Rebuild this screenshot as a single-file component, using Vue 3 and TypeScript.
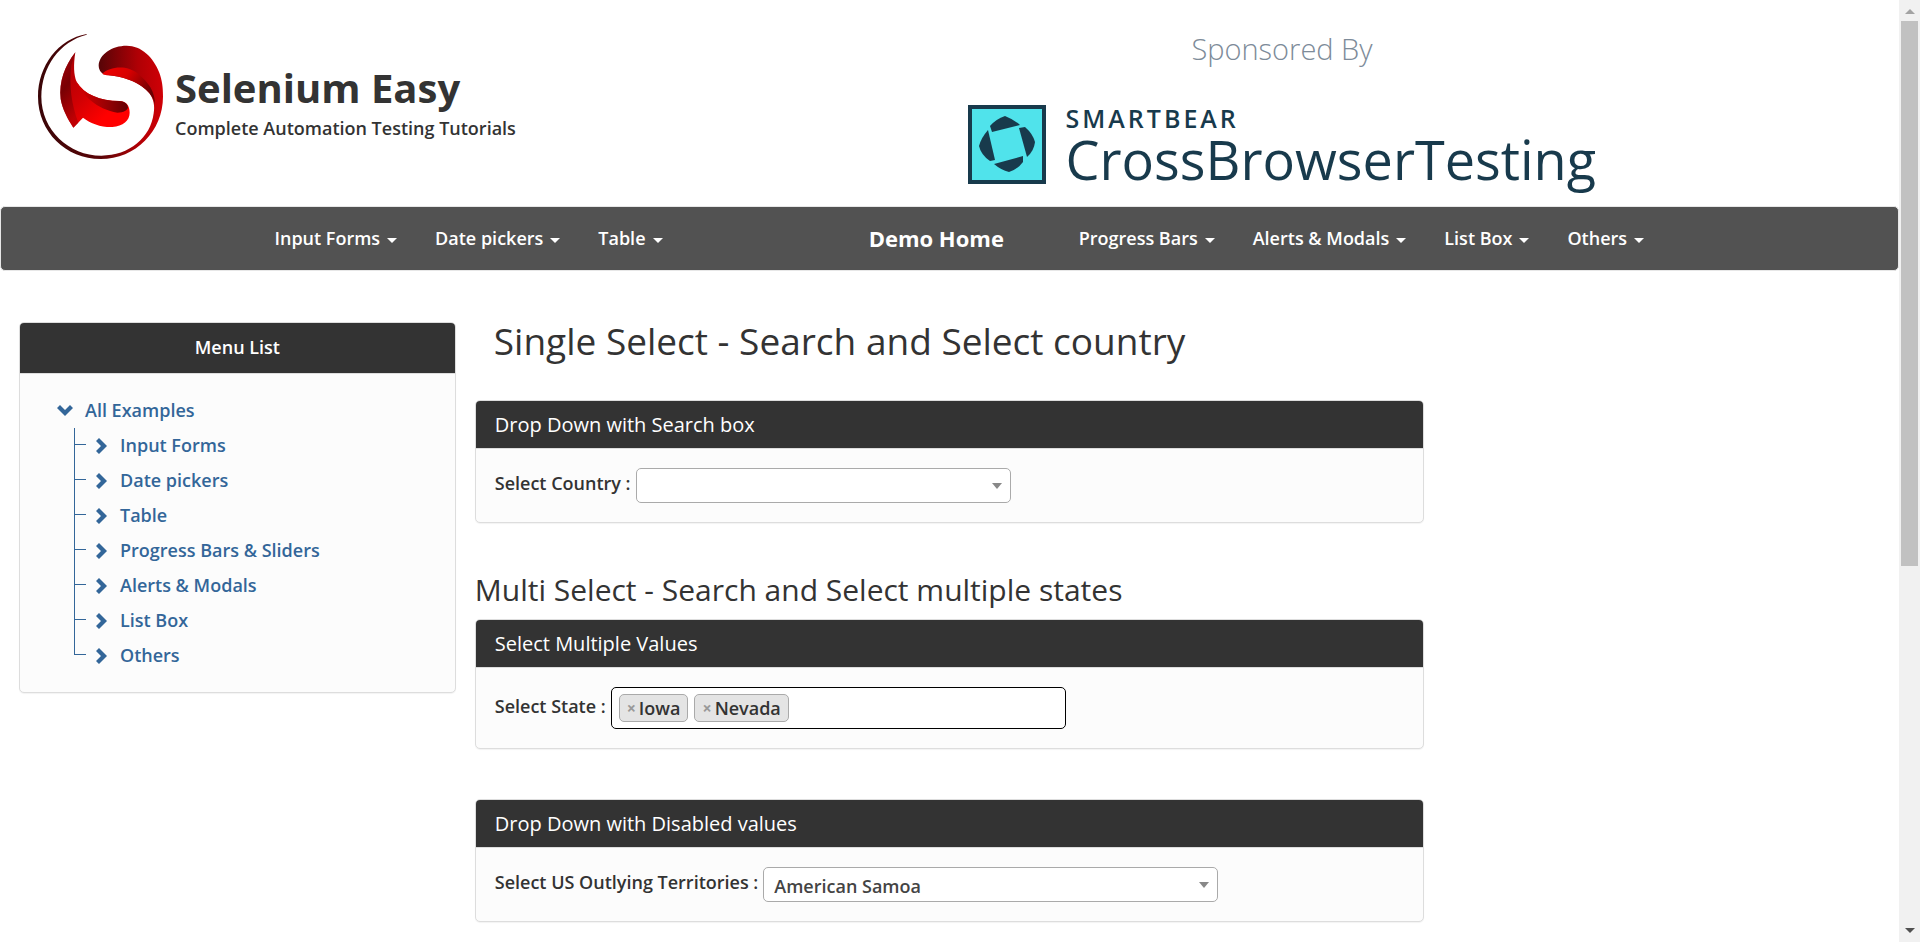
<script setup lang="ts">
import { ref } from 'vue'

const leftMenu: string[] = ['Input Forms', 'Date pickers', 'Table']
const rightMenu: string[] = ['Progress Bars', 'Alerts & Modals', 'List Box', 'Others']
const examples: string[] = [
  'Input Forms',
  'Date pickers',
  'Table',
  'Progress Bars & Sliders',
  'Alerts & Modals',
  'List Box',
  'Others',
]

const countries: string[] = ['Australia', 'Bangladesh', 'Denmark', 'Hong Kong', 'India', 'Japan', 'Netherlands']
const territories: string[] = ['American Samoa', 'Guam', 'Northern Mariana Islands', 'Puerto Rico']
const disabledTerritories: string[] = ['Guam']

const country = ref<string>('')
const territory = ref<string>('American Samoa')
const states = ref<string[]>(['Iowa', 'Nevada'])

function removeState(name: string): void {
  states.value = states.value.filter((s) => s !== name)
}
</script>

<template>
  <div class="window">
    <div class="page">
      <header class="header">
        <a class="brand" href="#">
          <svg class="brand-logo" viewBox="24 27 375 375" aria-hidden="true">
            <defs>
              <linearGradient id="ring" x1="0" y1="0" x2="1" y2="0">
                <stop offset="0" stop-color="#3a0507" />
                <stop offset="0.5" stop-color="#5a0407" />
                <stop offset="0.8" stop-color="#b00005" />
                <stop offset="1" stop-color="#d00006" />
              </linearGradient>
              <linearGradient id="fold" x1="0" y1="0" x2="1" y2="0.5">
                <stop offset="0" stop-color="#f00000" />
                <stop offset="0.45" stop-color="#d80000" />
                <stop offset="1" stop-color="#6a0003" />
              </linearGradient>
              <linearGradient id="flame" x1="0" y1="0" x2="1" y2="1">
                <stop offset="0" stop-color="#a00005" />
                <stop offset="0.45" stop-color="#d00003" />
                <stop offset="0.75" stop-color="#ff0000" />
              </linearGradient>
              <linearGradient id="edge" x1="0" y1="0" x2="0.3" y2="1">
                <stop offset="0" stop-color="#b00008" />
                <stop offset="0.5" stop-color="#5c0004" />
                <stop offset="1" stop-color="#b00004" />
              </linearGradient>
              <linearGradient id="lip" x1="0" y1="0" x2="1" y2="0">
                <stop offset="0" stop-color="#e00000" />
                <stop offset="0.55" stop-color="#a00003" />
                <stop offset="1" stop-color="#640003" />
              </linearGradient>
            </defs>
            <path
              fill="url(#ring)"
              d="M170 27C85 42 24 122 24 215C24 320 108 402 212 402C317 402 399 318 399 215C399 185 396 165 388 143C370 96 334 62 290 62C246 62 207 88 206 122C207 138 215 147 230 150C278 154 330 170 358 205C371 222 375 244 371 265C362 338 298 392 214 392C117 392 34 315 34 215C34 125 90 49 170 29Z"
            />
            <path
              fill="url(#fold)"
              d="M217 146C240 125 290 118 325 147C355 172 376 200 375 240C372 222 362 207 350 196C318 166 270 154 236 151C228 150 220 149 217 146Z"
            />
            <path
              fill="url(#flame)"
              d="M136 82C105 122 86 170 92 222C97 252 113 282 130 308L159 278C183 296 213 307 247 306C279 303 299 287 299 263C299 242 289 229 268 228C210 228 162 208 140 171C131 150 130 120 136 82Z"
            />
            <path
              fill="url(#edge)"
              d="M136 82C105 122 86 170 92 222C97 252 113 282 130 308L145 293C125 240 116 180 124 120Z"
              opacity="0.7"
            />
            <path
              fill="url(#lip)"
              d="M131 150C150 212 205 254 262 263C281 263 293 256 294 247C291 234 283 229 268 228C210 228 162 208 140 171C134 160 132 155 131 150Z"
            />
          </svg>
          <span class="brand-text">
            <span class="brand-name">Selenium Easy</span>
            <span class="brand-tagline">Complete Automation Testing Tutorials</span>
          </span>
        </a>

        <div class="sponsor">
          <span class="sponsor-by">Sponsored By</span>
          <a class="sponsor-link" href="#">
            <svg class="sponsor-logo" viewBox="0 0 78 79" aria-hidden="true">
              <rect width="78" height="79" fill="#183a4c" />
              <rect x="4" y="4" width="70" height="71" fill="#50e3eb" />
              <g fill="#183a4c">
                <path d="M37 11Q45 14 52 20L24 27L22 21Q28 14 37 11Z" />
                <path d="M51 23L57 22Q65 29 67 37Q66 46 59 52Z" />
                <path d="M55 51L55 57Q50 64 41 67Q33 65 26 59Z" />
                <path d="M20 25L27 55L22 56Q13 50 11 41Q13 33 20 25Z" />
              </g>
            </svg>
            <span class="sponsor-text">
              <span class="sponsor-company">SMARTBEAR</span>
              <span class="sponsor-product">CrossBrowserTesting</span>
            </span>
          </a>
        </div>
      </header>

      <nav class="navbar">
        <ul class="nav-group">
          <li v-for="item in leftMenu" :key="item">
            <a class="nav-link" href="#">{{ item }}<i class="caret"></i></a>
          </li>
        </ul>
        <a class="nav-home" href="#">Demo Home</a>
        <ul class="nav-group">
          <li v-for="item in rightMenu" :key="item">
            <a class="nav-link" href="#">{{ item }}<i class="caret"></i></a>
          </li>
        </ul>
      </nav>

      <div class="columns">
        <aside class="side">
          <section class="panel">
            <div class="panel-head menu-head">Menu List</div>
            <div class="tree">
              <a class="tree-root" href="#">
                <svg class="chevron-down" viewBox="0 0 16 11" aria-hidden="true">
                  <path d="M0 3L3 0L8 5L13 0L16 3L8 11Z" />
                </svg>
                All Examples
              </a>
              <ul class="tree-list">
                <li v-for="item in examples" :key="item" class="tree-item">
                  <a class="tree-link" href="#">
                    <svg class="chevron-right" viewBox="0 0 11 16" aria-hidden="true">
                      <path d="M3 0L11 8L3 16L0 13L5 8L0 3Z" />
                    </svg>
                    {{ item }}
                  </a>
                </li>
              </ul>
            </div>
          </section>
        </aside>

        <main class="main">
          <h2 class="title">Single Select - Search and Select country</h2>

          <section class="panel spaced">
            <div class="panel-head">Drop Down with Search box</div>
            <div class="panel-body">
              <label for="country">Select Country :</label>
              <span class="select-box narrow">
                <select id="country" v-model="country">
                  <option value=""></option>
                  <option v-for="c in countries" :key="c" :value="c">{{ c }}</option>
                </select>
              </span>
            </div>
          </section>

          <h3 class="subtitle">Multi Select - Search and Select multiple states</h3>

          <section class="panel spaced">
            <div class="panel-head">Select Multiple Values</div>
            <div class="panel-body">
              <label class="tall" for="state">Select State :</label>
              <div class="multi-box">
                <span v-for="s in states" :key="s" class="chip">
                  <button type="button" class="chip-remove" :aria-label="'Remove ' + s" @click="removeState(s)">×</button>{{ s }}
                </span>
                <input id="state" class="multi-input" type="text" autocomplete="off" />
              </div>
            </div>
          </section>

          <section class="panel">
            <div class="panel-head">Drop Down with Disabled values</div>
            <div class="panel-body">
              <label for="territory">Select US Outlying Territories :</label>
              <span class="select-box">
                <select id="territory" v-model="territory">
                  <option
                    v-for="t in territories"
                    :key="t"
                    :value="t"
                    :disabled="disabledTerritories.includes(t)"
                  >{{ t }}</option>
                </select>
              </span>
            </div>
          </section>
        </main>
      </div>
    </div>

    <div class="scrollbar" aria-hidden="true">
      <i class="arrow-up"></i>
      <div class="track"><div class="thumb"></div></div>
      <i class="arrow-down"></i>
    </div>
  </div>
</template>

<style>
body {
  margin: 0;
  background: #fff;
}
</style>

<style scoped>
* {
  box-sizing: border-box;
}

.window {
  display: flex;
  height: 100vh;
  overflow: hidden;
  font-family: "Open Sans", "Noto Sans", sans-serif;
  font-size: 18px;
  line-height: 25px;
  color: #333;
}

.page {
  flex: 1;
  min-width: 0;
}

a {
  text-decoration: none;
  color: inherit;
}

ul {
  list-style: none;
  margin: 0;
  padding: 0;
}

.header {
  display: grid;
  grid-template-columns: 1fr 1fr;
  height: 206px;
}

.brand {
  display: flex;
  gap: 12px;
  padding: 34px 0 0 38px;
}

.brand-logo {
  flex: none;
  width: 125px;
  height: 125px;
}

.brand-text {
  display: flex;
  flex-direction: column;
  padding-top: 26px;
}

.brand-name {
  font-size: 40px;
  line-height: 56px;
  font-weight: 700;
}

.brand-tagline {
  font-weight: 600;
}

.sponsor {
  display: flex;
  flex-direction: column;
  padding: 28px 0 0 18px;
}

.sponsor-by {
  width: 629px;
  text-align: center;
  font-size: 29px;
  line-height: 42px;
  font-weight: 300;
  color: #7d8b99;
}

.sponsor-link {
  display: flex;
  gap: 20px;
  padding-top: 35px;
  color: #183a4c;
}

.sponsor-logo {
  flex: none;
  width: 78px;
  height: 79px;
}

.sponsor-text {
  display: flex;
  flex-direction: column;
}

.sponsor-company {
  font-size: 25px;
  line-height: 26px;
  font-weight: 600;
  letter-spacing: 3px;
}

.sponsor-product {
  font-size: 54px;
  line-height: 57px;
  font-weight: 400;
}

.navbar {
  display: grid;
  grid-template-columns: 594fr 210fr 838fr;
  align-items: center;
  height: 65px;
  padding-left: 13.4%;
  background: #525252;
  border: 1px solid #e7e7e7;
  border-radius: 5px;
  color: #fff;
}

.nav-group {
  display: flex;
}

.nav-link {
  display: flex;
  align-items: center;
  gap: 7px;
  padding: 0 19px;
  font-weight: 600;
  white-space: nowrap;
}

.caret {
  margin-top: 4px;
  border: 5px solid transparent;
  border-top-color: currentColor;
  border-bottom: 0;
}

.nav-home {
  padding-left: 19px;
  font-size: 22px;
  font-weight: 700;
  white-space: nowrap;
}

.columns {
  display: grid;
  grid-template-columns: 3fr 6fr 3fr;
  padding-top: 44px;
}

.side {
  padding: 7px 19px 0;
}

.panel {
  background: #fcfcfc;
  border: 1px solid #ddd;
  border-radius: 5px;
  box-shadow: 0 1px 1px rgba(0, 0, 0, 0.05);
  overflow: hidden;
}

.panel-head {
  padding: 12px 19px;
  background: #333;
  border-bottom: 1px solid #ddd;
  color: #fff;
  font-size: 20px;
  line-height: 23px;
}

.menu-head {
  padding-bottom: 13px;
  text-align: center;
  font-size: 18px;
  line-height: 25px;
  font-weight: 600;
}

.tree {
  padding: 19px 37px 19px;
  color: #369;
  font-weight: 600;
}

.tree-root {
  display: flex;
  align-items: center;
  gap: 12px;
  height: 35px;
}

.chevron-down {
  width: 16px;
  height: 11px;
  fill: currentColor;
}

.chevron-right {
  width: 11px;
  height: 16px;
  fill: currentColor;
}

.tree-list {
  padding-left: 17px;
}

.tree-item {
  position: relative;
  padding-left: 22px;
}

.tree-item::before {
  content: "";
  position: absolute;
  left: 0;
  top: 0;
  height: 35px;
  border-left: 1px solid #369;
}

.tree-item:last-child::before {
  height: 17px;
}

.tree-item::after {
  content: "";
  position: absolute;
  left: 0;
  top: 16px;
  width: 12px;
  border-top: 1px solid #369;
}

.tree-link {
  display: flex;
  align-items: center;
  gap: 13px;
  height: 35px;
}

.title {
  margin: 0;
  padding: 0 19px 33px;
  font-size: 37px;
  line-height: 52px;
  font-weight: 400;
}

.subtitle {
  margin: 0 0 12px;
  font-size: 30px;
  line-height: 34px;
  font-weight: 400;
}

.spaced {
  margin-bottom: 50px;
}

.panel-body {
  display: flex;
  gap: 5px;
  padding: 19px;
}

label {
  line-height: 31px;
  font-weight: 600;
}

.tall {
  line-height: 39px;
}

.select-box {
  position: relative;
  width: 455px;
}

.narrow {
  width: 375px;
}

select {
  display: block;
  width: 100%;
  height: 35px;
  padding: 3px 30px 0 10px;
  appearance: none;
  background: #fff;
  border: 1px solid #aaa;
  border-radius: 5px;
  color: #444;
  font: inherit;
  font-weight: 600;
}

.select-box::after {
  content: "";
  position: absolute;
  right: 9px;
  top: 15px;
  border: 5px solid transparent;
  border-top: 6px solid #888;
  border-bottom: 0;
  pointer-events: none;
}

.multi-box {
  display: flex;
  gap: 6px;
  width: 455px;
  height: 42px;
  padding: 6px 7px;
  background: #fff;
  border: 1px solid #000;
  border-radius: 5px;
}

.chip {
  display: flex;
  align-items: center;
  gap: 3px;
  height: 28px;
  padding: 0 7px;
  background: #e4e4e4;
  border: 1px solid #aaa;
  border-radius: 5px;
  font-weight: 600;
}

.chip-remove {
  padding: 0;
  border: 0;
  background: none;
  color: #999;
  font: inherit;
  font-weight: 700;
  font-size: 16px;
}

.multi-input {
  flex: 1;
  min-width: 0;
  padding: 0;
  border: 0;
  outline: 0;
  background: transparent;
  font: inherit;
}

.scrollbar {
  display: flex;
  flex: none;
  flex-direction: column;
  align-items: center;
  width: 21px;
  padding: 9px 0;
  background: #f1f1f1;
}

.track {
  flex: 1;
  width: 17px;
  padding: 7px 0;
}

.thumb {
  height: 60.5%;
  background: #c1c1c1;
}

.arrow-up {
  border: 5px solid transparent;
  border-bottom-color: #a3a3a3;
  border-top: 0;
}

.arrow-down {
  border: 5px solid transparent;
  border-top-color: #505050;
  border-bottom: 0;
}
</style>
